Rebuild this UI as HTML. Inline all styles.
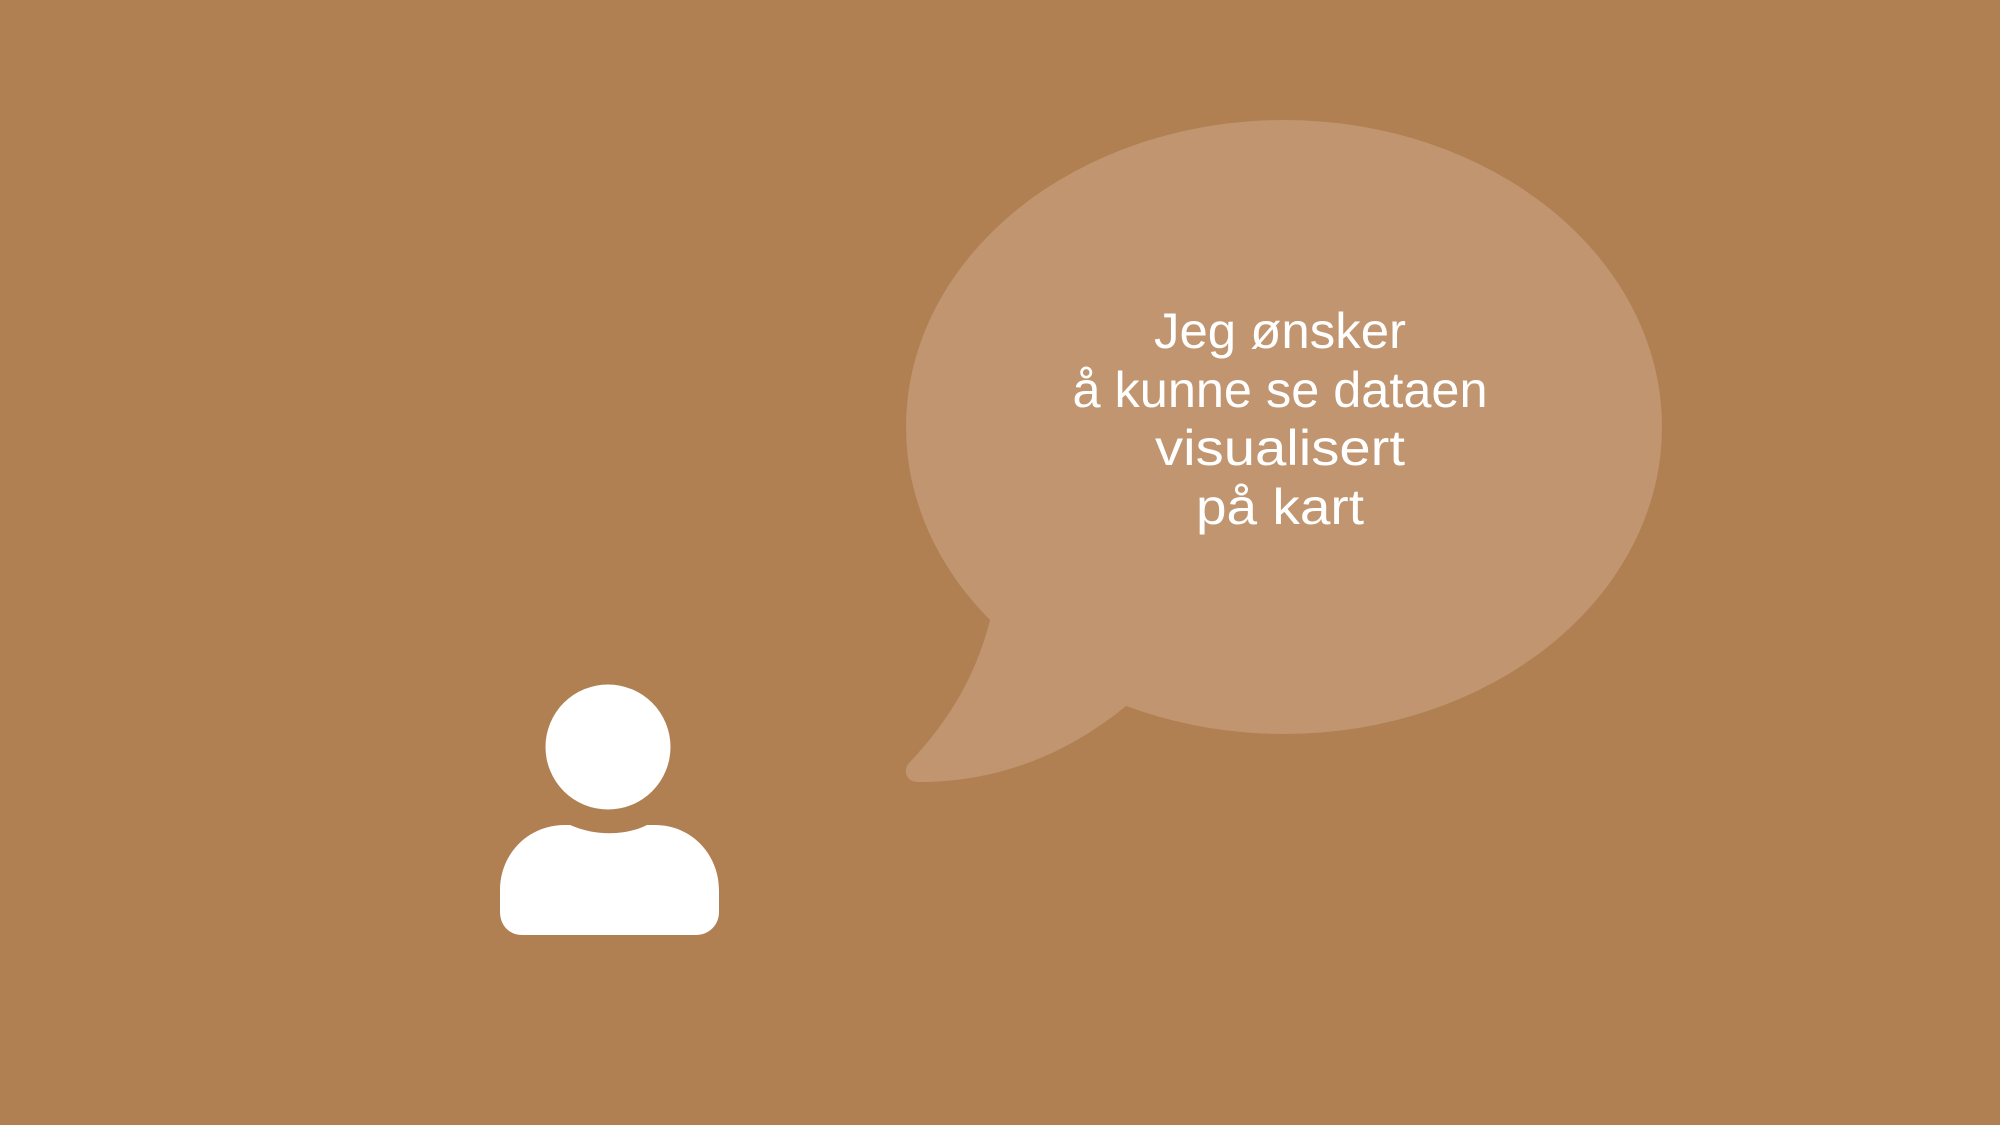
<!DOCTYPE html>
<html><head><meta charset="utf-8"><style>
html,body{margin:0;padding:0;width:2000px;height:1125px;overflow:hidden;background:#B08052}
svg{display:block}
text{font-family:"Liberation Sans",sans-serif;fill:#fff;font-size:50px}
</style></head><body>
<svg width="2000" height="1125" viewBox="0 0 2000 1125">
<rect width="2000" height="1125" fill="#B08052"/>
<g fill="#C09570">
<ellipse cx="1284" cy="427" rx="378" ry="307"/>
<path d="M960,560 L990,620 C975,680 945,725 910,762 C902,770 906,782 918,782 C990,782 1060,760 1126,706 L1140,640 Z"/>
</g>
<g fill="#fff">
<circle cx="608" cy="747" r="62.5"/>
<path d="M570,825 C595,836 625,836 647,825 L655,825 C692,825 719,855 719,890 L719,912 C719,925 709,935 696,935 L522,935 C509,935 500,925 500,912 L500,890 C500,855 527,825 565,825 Z"/>
</g>
<g text-anchor="middle">
<text x="1280" y="348" textLength="252" lengthAdjust="spacingAndGlyphs">Jeg ønsker</text>
<text x="1280" y="407" textLength="415" lengthAdjust="spacingAndGlyphs">å kunne se dataen</text>
<text x="1280" y="465" textLength="250" lengthAdjust="spacingAndGlyphs">visualisert</text>
<text x="1280" y="524" textLength="168" lengthAdjust="spacingAndGlyphs">på kart</text>
</g>
</svg>
</body></html>
